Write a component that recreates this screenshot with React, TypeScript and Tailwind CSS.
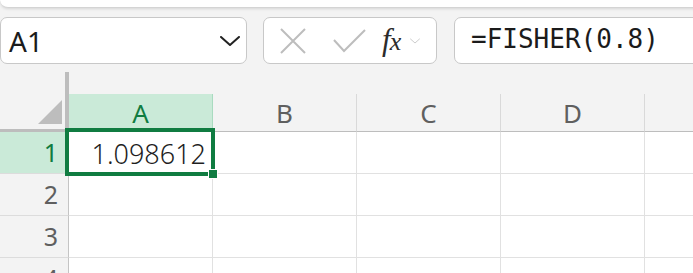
import React from 'react';

const columns = ['A', 'B', 'C', 'D', 'E'];
const rows = [1, 2, 3, 4];

function Chevron({ className, stroke, width = 2 }: { className: string; stroke: string; width?: number }) {
  return (
    <svg className={className} viewBox="0 0 20 10" fill="none">
      <polyline points="1,1 10,9 19,1" stroke={stroke} strokeWidth={width} strokeLinejoin="round" strokeLinecap="round" />
    </svg>
  );
}

export default function App() {
  return (
    <div className="relative w-[693px] h-[273px] overflow-hidden bg-[#f3f3f3] font-['Noto_Sans',sans-serif]">
      {/* ribbon edge */}
      <div className="h-[8px] w-[720px] bg-white rounded-b-[8px] border-b border-[#d4d4d4] shadow-[0_1px_3px_rgba(0,0,0,0.12)]" />

      {/* name box + formula bar */}
      <div className="flex mt-[9px] h-[47px]">
        <div className="w-[247px] shrink-0 flex items-center justify-between pl-[8px] pr-[6px] bg-white border border-[#c8c8c8] rounded-[7px]">
          <span className="text-[28px] leading-none text-[#1b1b1b]">A1</span>
          <Chevron className="w-[20px] h-[10px]" stroke="#222" />
        </div>

        <div className="ml-[16px] w-[174px] shrink-0 flex items-center pl-[16px] bg-white border border-[#c8c8c8] rounded-[7px]">
          <svg className="w-[26px] h-[26px]" viewBox="0 0 26 26" fill="none">
            <path d="M1 1 L25 25 M25 1 L1 25" stroke="#bdbdbd" strokeWidth="2" />
          </svg>
          <svg className="ml-[27px] w-[33px] h-[24px]" viewBox="0 0 33 24" fill="none">
            <polyline points="1,11 11,22 32,1" stroke="#bdbdbd" strokeWidth="2" />
          </svg>
          <span className="ml-[16px] -mt-[2px] flex items-baseline text-[#2b2b2b] leading-none">
            <span className="font-['Liberation_Serif',serif] italic text-[31px]">f</span>
            <span className="font-['Liberation_Serif',serif] italic text-[26px] -ml-[1px]">x</span>
          </span>
          <Chevron className="ml-[9px] w-[10px] h-[6px]" stroke="#bbbbbb" width={1.5} />
        </div>

        <div className="ml-[17px] w-[300px] shrink-0 flex items-center pl-[16px] bg-white border border-[#c8c8c8] rounded-[7px]">
          <span className="font-['DejaVu_Sans_Mono',monospace] text-[26px] leading-none text-[#1b1b1b] -mt-[4px]">=FISHER(0.8)</span>
        </div>
      </div>

      {/* sheet */}
      <div className="relative mt-[8px]">
        <div className="grid grid-cols-[69px_144px_144px_144px_144px_144px] grid-rows-[60px_42px_42px_42px_42px] w-[789px]">
          <div className="relative border-r-[4px] border-b-[3px] border-[#bdbdbd]">
            <div className="absolute right-[3px] bottom-[5px] w-0 h-0 border-l-[24px] border-l-transparent border-b-[24px] border-b-[#bdbdbd]" />
          </div>
          {columns.map((c) => (
            <div
              key={c}
              className={`self-end h-[38px] flex items-center justify-center text-[26px] leading-none border-r border-b ${
                c === 'A'
                  ? 'bg-[#caead8] text-[#107c41] border-r-[#a9dbc0] border-b-[#107c41]'
                  : 'text-[#5f5f5f] border-r-[#d9d9d9] border-b-[#bdbdbd]'
              }`}
            >
              {c === 'E' ? '' : c}
            </div>
          ))}

          {rows.map((r) => (
            <React.Fragment key={r}>
              <div
                className={`flex items-center justify-end pr-[10px] text-[25px] leading-none border-r border-r-[#c4c4c4] border-b border-b-[#dcdcdc] ${
                  r === 1 ? 'bg-[#caead8] text-[#107c41]' : 'text-[#5f5f5f]'
                }`}
              >
                {r}
              </div>
              {columns.map((c) => (
                <div
                  key={c}
                  className="flex items-center justify-end pr-[6px] pt-[1px] bg-white border-r border-b border-[#e1e1e1] font-['Noto_Sans',sans-serif] font-light text-[27px] leading-none text-[#1f1f1f]"
                >
                  {r === 1 && c === 'A' ? '1.098612' : ''}
                </div>
              ))}
            </React.Fragment>
          ))}
        </div>

        {/* active cell */}
        <div className="absolute left-[65px] top-[56px] w-[150px] h-[48px] border-[4px] border-[#107c41]" />
        <div className="absolute left-[208px] top-[97px] w-[10px] h-[10px] bg-[#107c41] border border-white" />
      </div>
    </div>
  );
}
